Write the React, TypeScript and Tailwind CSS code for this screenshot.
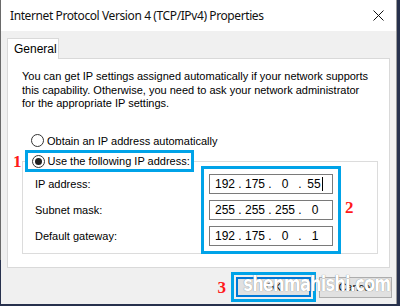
import React from "react";

const ui = "font-['Liberation_Sans',Arial,sans-serif] text-[11px] text-[#000] whitespace-nowrap";

function Radio({ checked }: { checked?: boolean }) {
  return (
    <span className="w-[13px] h-[13px] rounded-full border border-[#333] bg-white flex items-center justify-center shrink-0">
      {checked && <span className="w-[7px] h-[7px] rounded-full bg-[#222]" />}
    </span>
  );
}

function IpField({ parts, cursor }: { parts: string[]; cursor?: boolean }) {
  return (
    <div className="h-[20px] w-[124px] border border-[#7a7a7a] bg-white flex items-center pl-[2px] text-[12px]">
      {parts.map((p, i) => (
        <React.Fragment key={i}>
          <span className="w-[26px] text-center leading-[18px] flex items-center justify-center">
            {p}
            {cursor && i === 3 && <span className="inline-block w-px h-[14px] bg-black ml-px" />}
          </span>
          {i < 3 && <span className="w-[4px] text-center leading-[18px]">.</span>}
        </React.Fragment>
      ))}
    </div>
  );
}

const Num = ({ n }: { n: string }) => (
  <span className="font-['Liberation_Serif',serif] font-bold text-[17px] leading-none text-[#ff1a1a]">{n}</span>
);

export default function App() {
  return (
    <div className={`w-[400px] h-[306px] bg-[#27314d] flex overflow-hidden ${ui}`}>
      <div className="w-px h-[260px] bg-[#6a6a6a]" />
      <div className="w-[396px] h-[304px] flex flex-col bg-[#f0f0f0] border-r border-[#9a9a9a]">
        <div className="h-[31px] bg-white flex items-center justify-between pl-[9px] pr-[10px] shrink-0">
          <span className="font-['Noto_Sans',sans-serif] text-[12px] tracking-[-0.4px] text-[#111]">
            Internet Protocol Version 4 (TCP/IPv4) Properties
          </span>
          <svg width="11" height="11" viewBox="0 0 11 11" className="mr-[2px]">
            <path d="M0.5 0.5 L10.5 10.5 M10.5 0.5 L0.5 10.5" stroke="#111" strokeWidth="1" />
          </svg>
        </div>

        <div className="flex flex-col px-[6px] pt-[7px]">
          <div className="w-[52px] h-[21px] bg-white border border-b-0 border-[#d9d9d9] pl-[6px] flex items-center -mb-px relative z-10 text-[12px]">
            General
          </div>
          <div className="h-[210px] bg-white border border-[#d9d9d9] flex flex-col">
            <p className="pl-[14px] pt-[11px] leading-[13.5px]">
              You can get IP settings assigned automatically if your network supports
              <br />
              this capability. Otherwise, you need to ask your network administrator
              <br />
              for the appropriate IP settings.
            </p>

            <div className="flex items-center gap-[3px] pl-[23px] mt-[22px]">
              <Radio />
              <span>Obtain an IP address automatically</span>
            </div>

            <div className="flex items-center gap-[3px] pl-[5px] mt-[1px] relative z-10">
              <Num n="1" />
              <div className="flex items-center gap-[3px] border-[3px] border-[#00a3e8] bg-white pl-[4px] pr-[4px] h-[22px] w-[169px]">
                <Radio checked />
                <span>Use the following IP address:</span>
              </div>
            </div>

            <div className="ml-[14px] w-[356px] h-[93px] border border-[#dcdcdc] -mt-[11px] flex pl-[12px] pt-[4px]">
              <div className="flex flex-col gap-[6px] pt-[8px] w-[166px]">
                <span className="h-[20px] flex items-center">IP address:</span>
                <span className="h-[20px] flex items-center">Subnet mask:</span>
                <span className="h-[20px] flex items-center">Default gateway:</span>
              </div>
              <div className="flex flex-col gap-[6px] border-[3px] border-[#00a3e8] px-[5px] pt-[5px] h-[88px]">
                <IpField parts={["192", "175", "0", "55"]} cursor />
                <IpField parts={["255", "255", "255", "0"]} />
                <IpField parts={["192", "175", "0", "1"]} />
              </div>
              <div className="flex items-center ml-[4px] pb-[4px]">
                <Num n="2" />
              </div>
            </div>
          </div>

          <div className="flex items-center justify-end -mr-[2px] mt-[4px] relative">
            <Num n="3" />
            <div className="ml-[5px] border-[3px] border-[#00a3e8] p-[2px]">
              <div className="w-[75px] h-[20px] bg-[#e1e1e1] border-2 border-[#0078d7] flex items-center justify-center">
                OK
              </div>
            </div>
            <div className="ml-[3px] w-[73px] h-[21px] bg-[#e1e1e1] border border-[#adadad] flex items-center justify-center mt-[1px]">
              Cancel
            </div>
            <span className="absolute right-[2px] top-[1px] origin-right scale-x-[0.82] font-['DejaVu_Sans_Condensed','DejaVu_Sans',sans-serif] font-bold text-[22px] leading-none text-white tracking-[-1px] [text-shadow:0_0_1px_#666]">
              shenmahishi.com
            </span>
          </div>
        </div>
      </div>
    </div>
  );
}
